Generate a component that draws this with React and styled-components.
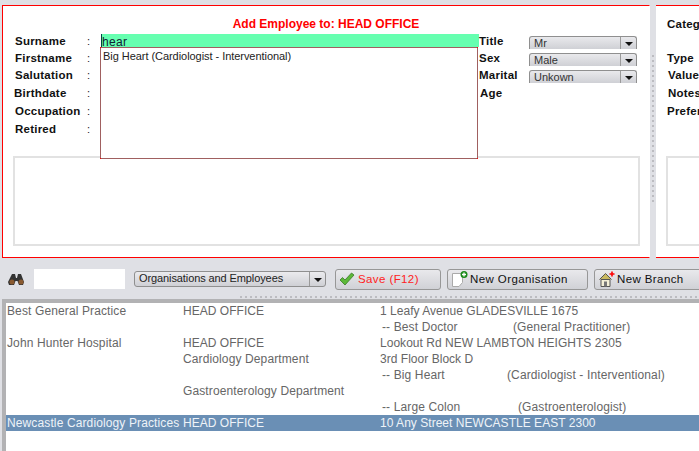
import React from "react";
import styled, { createGlobalStyle } from "styled-components";

const Global = createGlobalStyle`
  html, body { margin: 0; padding: 0; background: #dfe0e5; }
  body { font-family: "Liberation Sans", Arial, sans-serif; }
  * { box-sizing: border-box; }
  svg { flex: none; display: block; }
`;

const Page = styled.div`
  width: 699px; height: 451px; overflow: hidden; background: #dfe0e5;
  padding-top: 5px; display: flex; flex-direction: column;
`;
const TopSplit = styled.div`display: flex; height: 253px; flex: none;`;
const EmployeePanel = styled.section`
  position: relative; width: 648px; margin-left: 2px; background: #fff; flex: none;
  border: 1px solid #f00; border-right: 1px solid #fff;
`;
const PanelTitle = styled.h1`
  margin: 0; padding-top: 11px; height: 28px; text-align: center;
  font-size: 12px; line-height: 14px; font-weight: bold; color: #f00;
`;
const FormGrid = styled.div`
  display: grid; margin-left: 12px;
  grid-template-columns: 73px 13px 378px 50px 108px;
  grid-template-rows: 17px 17px 18px 18px 18px 18px;
`;
const FieldLabel = styled.label`
  font-size: 11.5px; font-weight: bold; color: #111; line-height: 14px;
  letter-spacing: 0.23px; white-space: nowrap;
  margin-left: ${p => p.$shift || 0}px;
`;
const Colon = styled.span`font-size: 11px; color: #222; line-height: 15px; margin-left: -1px;`;
const SurnameCell = styled.div`
  height: 13px; background: #66ffb0;
  font-size: 12px; line-height: 16px; color: #123; letter-spacing: .3px;
  border-left: 1px solid #044;
`;
const Popup = styled.div`
  position: absolute; left: 97px; top: 41px; width: 378px; height: 112px; background: #fff;
  border: 1px solid #a06060; font-size: 11px; line-height: 14px; color: #222; padding: 1px 2px;
  letter-spacing: -0.05px; z-index: 2;
  &::before {
    content: ""; position: absolute; inset: -1px; pointer-events: none;
    background:
      linear-gradient(#f00, #f00) 0 0 / 1px 1px no-repeat,
      linear-gradient(#f00, #f00) 100% 0 / 1px 1px no-repeat,
      linear-gradient(#f00, #f00) 0 100% / 1px 1px no-repeat,
      linear-gradient(#f00, #f00) 100% 100% / 1px 1px no-repeat;
  }
`;
const SelectBox = styled.div`
  height: 13px; margin-top: 2px; width: 108px; display: flex;
  border: 1px solid #8f8f8f; border-bottom: 0; border-radius: 3px 3px 0 0;
  background: linear-gradient(#e9e9ec, #cfd0d5);
  font-size: 11px; line-height: 13px; color: #333; overflow: hidden;
`;
const SelectText = styled.span`flex: 1; padding-left: 4px; letter-spacing: ${p => p.$track || 0}px; white-space: nowrap;`;
const Arrow = styled.span`
  width: 16px; flex: none; border-left: 1px solid #9a9a9a; display: flex; align-items: center; justify-content: center;
  &::after { content: ""; border: 4px solid transparent; border-top: 4px solid #111; border-bottom: 0; margin-top: 2px; }
`;
const NotesBox = styled.div`
  margin: 16px 0 0 10px; width: 627px; height: 90px; border: 2px solid #e2e2e2; background: #fff;
`;
const VSplitter = styled.div`
  width: 6px; flex: none; position: relative; background: #dfe0e5;
  &::after {
    content: ""; position: absolute; left: 2px; top: 50px; width: 2px; height: 148px;
    background: repeating-linear-gradient(#bcbcc1 0 2px, transparent 2px 5px);
  }
`;
const SidePanel = styled.section`
  flex: 1; background: #fff; border-top: 1px solid #f00; border-bottom: 1px solid #f00; padding: 11px 0 0 11px;
  overflow: hidden; min-width: 0;
`;
const SideRow = styled.div`
  font-size: 11.5px; font-weight: bold; color: #111; line-height: 14px; letter-spacing: .23px;
  height: ${p => p.$h || 17}px; margin-left: ${p => p.$shift || 0}px; white-space: nowrap;
`;
const SideBox = styled.div`
  margin: 34px 0 0 -1px; width: 60px; height: 90px; border: 2px solid #e2e2e2; background: #fff;
`;
const Toolbar = styled.div`
  height: 38px; flex: none; display: flex; align-items: center; padding-left: 8px; overflow: hidden;
  padding-top: 4px;
`;
const SearchInput = styled.div`width: 91px; height: 20px; flex: none; background: #fff; margin: 0 9px;`;
const Combo = styled.div`
  width: 192px; height: 16px; flex: none; display: flex; border: 1px solid #8f8f8f; border-radius: 3px;
  background: linear-gradient(#ebebee, #cfd0d5); font-size: 11px; line-height: 13px; color: #222; overflow: hidden;
`;
const ToolButton = styled.button`
  width: ${p => p.$w}px; height: 21px; flex: none; margin-left: ${p => p.$gap}px; padding: 0 0 0 ${p => p.$pad}px;
  display: flex; align-items: center; gap: ${p => p.$iconGap}px;
  border: 1px solid #979797; border-radius: 3px; background: linear-gradient(#e9e9ec, #d0d1d6);
  font: 11.5px "Liberation Sans", Arial, sans-serif; letter-spacing: .4px; color: ${p => p.$danger ? "#f22" : "#111"};
  white-space: nowrap;
`;
const HSplitter = styled.div`
  height: 3px; flex: none; margin-left: 240px;
  background: repeating-linear-gradient(90deg, #bcbcc1 0 2px, transparent 2px 5px);
  background-size: 100% 2px; background-repeat: no-repeat;
`;
const List = styled.div`
  flex: 1; margin: 0 0 0 2px; border-left: 4px solid #b2b2b4; border-top: 4px solid #b2b2b4; background: #fff;
  font-size: 12px; letter-spacing: .12px; color: #666; overflow: hidden;
`;
const Row = styled.div`
  display: grid; grid-template-columns: 176px 197px 1fr; height: 16px; line-height: 16px; padding-left: 1px; white-space: nowrap;
  background: ${p => p.$selected ? "#6a8fb5" : "transparent"};
  color: ${p => p.$selected ? "#eef3f8" : "inherit"};
`;
const CapsCell = styled.span`letter-spacing: .03px;`;
const Contact = styled.span`display: flex; padding-left: 2px;`;
const ContactName = styled.span`width: ${p => p.$w}px; flex: none;`;

const Binoculars = () => (
  <svg width="17" height="13" viewBox="0 0 17 13">
    <path d="M4 1h3l1 4h1l1-4h3l3 8-1 3H11L9.500 8h-2L6 12H1L0 9z" fill="#333"/>
    <circle cx="4" cy="9" r="2.500" fill="#8a5a30"/><circle cx="13" cy="9" r="2.500" fill="#8a5a30"/>
  </svg>
);
const Check = () => (
  <svg width="16" height="14" viewBox="0 0 16 14">
    <path d="M1 8l2.500-2.500 2.500 2.500 6.500-7 2.500 2-9 10z" fill="#5cb838" stroke="#3a7a28" strokeWidth=".8"/>
  </svg>
);
const NewDoc = () => (
  <svg width="16" height="16" viewBox="0 0 16 16">
    <path d="M.5 2.500h10v9l-3.500 4H.5z" fill="#fff" stroke="#aaa"/>
    <circle cx="12" cy="3.500" r="3.500" fill="#1a8a1a"/>
    <path d="M10 3.500h4M12 1.500v4" stroke="#fff" strokeWidth="1.3"/>
  </svg>
);
const House = () => (
  <svg width="16" height="16" viewBox="0 0 16 16">
    <path d="M.5 8.500l6-6 6 6" fill="#c8b860" stroke="#555"/>
    <path d="M2 8.500v7h9v-7z" fill="#f4f0d8" stroke="#555"/>
    <path d="M5 10.500h3v5H5z" fill="#777"/>
    <path d="M10.500 3h5M13 .5v5" stroke="#f00" strokeWidth="1.6"/>
  </svg>
);

const labels = [["Surname"],["Firstname"],["Salutation"],["Birthdate",-1],["Occupation"],["Retired"]];
const rightCol = [["Title","Mr"],["Sex","Male"],["Marital","Unkown"],["Age",null,1],[],[]];

export default function App() {
  return (
    <Page>
      <Global/>
      <TopSplit>
        <EmployeePanel>
          <PanelTitle>Add Employee to: HEAD OFFICE</PanelTitle>
          <FormGrid>
            {labels.map(([l, s], i) => (
              <React.Fragment key={l}>
                <FieldLabel $shift={s}>{l}</FieldLabel>
                <Colon>:</Colon>
                {i === 0 ? <SurnameCell>hear</SurnameCell> : <span/>}
                <FieldLabel $shift={rightCol[i][2]}>{rightCol[i][0]}</FieldLabel>
                {rightCol[i][1] ? <SelectBox><SelectText>{rightCol[i][1]}</SelectText><Arrow/></SelectBox> : <span/>}
              </React.Fragment>
            ))}
          </FormGrid>
          <Popup>Big Heart (Cardiologist - Interventional)</Popup>
          <NotesBox/>
        </EmployeePanel>
        <VSplitter/>
        <SidePanel>
          <SideRow $h={34}>Category</SideRow>
          <SideRow>Type</SideRow>
          <SideRow $h={18} $shift={1}>Value</SideRow>
          <SideRow $h={18} $shift={1}>Notes</SideRow>
          <SideRow $h={18}>Preferred</SideRow>
          <SideBox/>
        </SidePanel>
      </TopSplit>
      <Toolbar>
        <Binoculars/>
        <SearchInput/>
        <Combo><SelectText $track={-0.1}>Organisations and Employees</SelectText><Arrow/></Combo>
        <ToolButton $w={106} $gap={9} $pad={3} $iconGap={3} $danger><Check/>Save (F12)</ToolButton>
        <ToolButton $w={141} $gap={6} $pad={4} $iconGap={2}><NewDoc/>New Organisation</ToolButton>
        <ToolButton $w={130} $gap={6} $pad={4} $iconGap={2}><House/>New Branch</ToolButton>
      </Toolbar>
      <HSplitter/>
      <List>
        <Row><span>Best General Practice</span><CapsCell>HEAD OFFICE</CapsCell><CapsCell>1 Leafy Avenue GLADESVILLE 1675</CapsCell></Row>
        <Row><span/><span/><Contact><ContactName $w={131}>-- Best Doctor</ContactName>(General Practitioner)</Contact></Row>
        <Row><span>John Hunter Hospital</span><CapsCell>HEAD OFFICE</CapsCell><CapsCell>Lookout Rd NEW LAMBTON HEIGHTS 2305</CapsCell></Row>
        <Row><span/><span>Cardiology Department</span><CapsCell>3rd Floor Block D</CapsCell></Row>
        <Row><span/><span/><Contact><ContactName $w={125}>-- Big Heart</ContactName>(Cardiologist - Interventional)</Contact></Row>
        <Row><span/><span>Gastroenterology Department</span><span/></Row>
        <Row><span/><span/><Contact><ContactName $w={136}>-- Large Colon</ContactName>(Gastroenterologist)</Contact></Row>
        <Row $selected><span>Newcastle Cardiology Practices</span><CapsCell>HEAD OFFICE</CapsCell><CapsCell>10 Any Street NEWCASTLE EAST 2300</CapsCell></Row>
      </List>
    </Page>
  );
}
